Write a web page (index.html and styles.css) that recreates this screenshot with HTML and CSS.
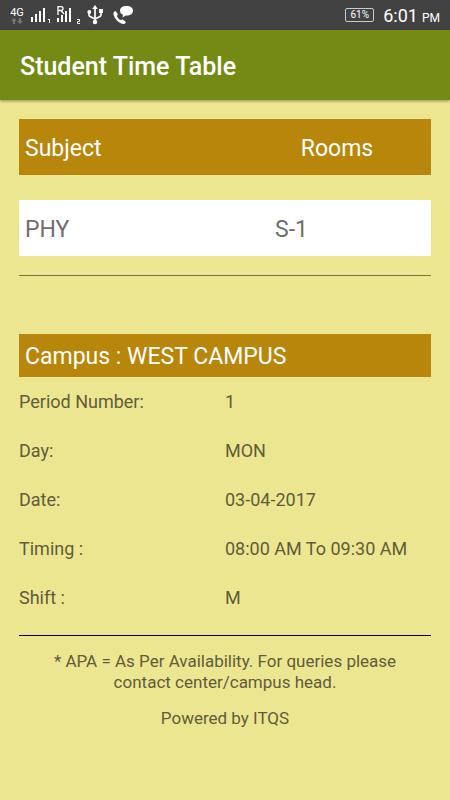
FILE: index.html
```html
<!DOCTYPE html>
<html lang="en">
<head>
<meta charset="utf-8">
<meta name="viewport" content="width=device-width, initial-scale=1">
<title>Student Time Table</title>
<link rel="stylesheet" href="styles.css">
</head>
<body>
<div class="status">
  <div class="network">
    <span class="network-type">4G</span>
    <svg width="12" height="6" viewBox="0 0 12 6" aria-hidden="true"><path fill="#777" d="M3 0L6 3H4V6H2V3H0ZM9 6L6 3H8V0H10V3H12Z"/></svg>
  </div>
  <svg class="signal" width="20" height="18" viewBox="0 0 20 18" aria-hidden="true">
    <path fill="#fff" d="M0 11h2v5H0zM4 8h2v8H4zM8 5h2v11H8zM12 2h2v14h-2zM17 13h2v4h-1v-3h-1z"/>
  </svg>
  <svg class="signal-roaming" width="26" height="20" viewBox="0 0 26 20" aria-hidden="true">
    <path fill="#fff" d="M0 13h2v4H0zM4 10h2v7H4zM8 6h2v11H8zM12 3h2v14h-2z"/>
    <path fill="none" stroke="#fff" stroke-width="1.3" d="M1 10V1.700H4Q6 1.700 6 3.500Q6 5.500 4 5.500H1M4 5.500L7 9"/>
    <path fill="none" stroke="#fff" stroke-width="1" d="M20 14.500H22.500V16.500H20.500V18.500H23"/>
  </svg>
  <svg class="usb" width="16" height="20" viewBox="0 0 16 20" aria-hidden="true">
    <path fill="none" stroke="#fff" stroke-width="1.700" d="M8 17V3M8 14L3 11.500Q2 11 2 10V7M8 14L13 11.500Q14 11 14 10V6"/>
    <circle cx="8" cy="17" r="2.300" fill="#fff"/><circle cx="2.300" cy="7" r="1.900" fill="#fff"/>
    <path fill="#fff" d="M8 0L10.800 4H5.200ZM12 4h4v4h-4z"/>
  </svg>
  <svg width="20" height="20" viewBox="0 0 20 20" aria-hidden="true">
    <path fill="#fff" d="M13.500 1C17.500 1 20 3 20 5.800C20 8.800 17.300 10.600 13.500 10.600L12.800 10.500L9.500 12.500L10 9.800C8 9 7 7.600 7 5.800C7 3 9.500 1 13.500 1Z"/>
    <path fill="#fff" d="M1.500 6.500C0 7.500 0 10 2 13C4.500 16.500 7.500 19 10.300 19C12 19 13 17.800 12.800 17L9.800 14.500C9 14.200 8.500 15.300 7.700 15.100C6 14.500 4.500 12.500 4 11.200C3.900 10.300 5 10 4.700 9L3 6.400C2.500 6 2 6.200 1.500 6.500Z"/>
  </svg>
  <span class="battery">61%</span>
  <span class="clock">6:01 <small class="meridiem">PM</small></span>
</div>
<header class="app-bar"><h1 class="title">Student Time Table</h1></header>
<main class="content">
  <table class="classes">
    <thead><tr class="class-head"><th scope="col">Subject</th><th class="rooms" scope="col">Rooms</th></tr></thead>
    <tbody><tr class="class-row"><td>PHY</td><td class="room">S-1</td></tr></tbody>
  </table>
  <hr class="rule rule-soft">
  <h2 class="campus">Campus : WEST CAMPUS</h2>
  <dl class="details">
    <dt>Period Number:</dt><dd>1</dd>
    <dt>Day:</dt><dd>MON</dd>
    <dt>Date:</dt><dd>03-04-2017</dd>
    <dt>Timing :</dt><dd>08:00 AM To 09:30 AM</dd>
    <dt>Shift :</dt><dd>M</dd>
  </dl>
  <hr class="rule">
  <footer class="notes">
    <p>* APA = As Per Availability. For queries please contact center/campus head.</p>
    <p>Powered by ITQS</p>
  </footer>
</main>
</body>
</html>
```
FILE: styles.css
```css
* {
  box-sizing: border-box;
}

body {
  margin: 0;
  background: #ede691;
  color: #5f5c3a;
  font-family: Roboto, sans-serif;
  font-size: 18px;
}

.status {
  display: flex;
  align-items: center;
  height: 30px;
  padding: 0 10px;
  background: #424242;
  color: #fff;
}

.network {
  display: flex;
  flex-direction: column;
  align-items: center;
  width: 14px;
  margin-right: 7px;
}

.network-type {
  font-size: 11px;
  line-height: 11px;
}

.signal {
  margin-right: 6px;
}

.signal-roaming {
  margin-right: 4px;
}

.usb {
  margin-right: 10px;
}

.battery {
  width: 29px;
  height: 14px;
  margin-left: auto;
  margin-right: 9px;
  border: 1px solid #ccc;
  border-radius: 2px;
  font-size: 10px;
  line-height: 12px;
  text-align: center;
}

.clock {
  display: flex;
  align-items: baseline;
  gap: 4px;
  font-size: 18px;
}

.meridiem {
  font-size: 12px;
}

.app-bar {
  display: flex;
  align-items: center;
  height: 70px;
  padding: 2px 20px 0;
  background: #758a14;
  box-shadow: 0 1px 3px rgba(0, 0, 0, 0.4);
  color: #fff;
}

.title {
  margin: 0;
  font-size: 25px;
  font-weight: 500;
}

.content {
  padding: 19px;
}

.classes {
  width: 100%;
  margin: -25px 0 -6px;
  border-spacing: 0 25px;
  table-layout: fixed;
  font-size: 23px;
  text-align: left;
}

.classes th,
.classes td {
  width: 50%;
  height: 56px;
  padding: 2px 6px 0;
  font-weight: 400;
}

.class-head {
  background: #b8860b;
  color: #fff;
}

.class-row {
  background: #fff;
  color: #6e6e6e;
}

.classes .rooms {
  padding-left: 24px;
  text-align: center;
}

.classes .room {
  padding-left: 50px;
}

.rule {
  height: 1px;
  margin: 0;
  border: 0;
  background: #000;
}

.rule-soft {
  background: #77734a;
}

.campus {
  margin: 58px 0 0;
  padding: 9px 6px 7px;
  background: #b8860b;
  color: #fff;
  font-size: 23px;
  font-weight: 400;
  line-height: 27px;
}

.details {
  display: grid;
  grid-template-columns: 1fr 1fr;
  margin: 0 0 13px;
  line-height: 49px;
}

.details dd {
  margin: 0;
}

.notes {
  padding: 0 24px;
  font-size: 17px;
  line-height: 21px;
  text-align: center;
}

.notes p {
  margin: 15px 0;
}
```
